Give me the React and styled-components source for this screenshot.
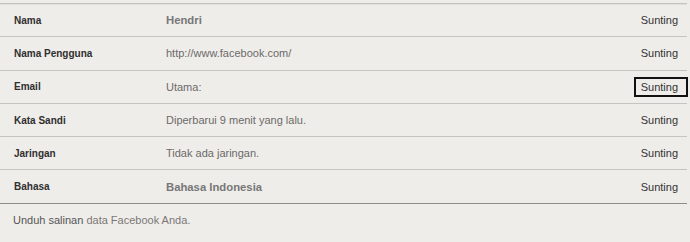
import React from "react";
import styled, { createGlobalStyle } from "styled-components";

const Global = createGlobalStyle`
  html, body { margin: 0; padding: 0; background: #efedea; }
  body { font-family: "Liberation Sans", Arial, sans-serif; font-size: 11px; }
`;

const Page = styled.div`
  width: 687px;
  padding-top: 3px;
`;

const Table = styled.div`
  border-top: 1px solid #c4c2bf;
  box-shadow: inset 0 1px 0 #e2e0dd;
  border-bottom: 1px solid #8e8c89;
`;

const Row = styled.div`
  display: grid;
  grid-template-columns: 152px 1fr auto;
  align-items: center;
  height: 32.3px;
  border-top: ${(p) => (p.$first ? "none" : "1px solid #c6c4c1")};
  padding: 0 2px 0 14px;
`;

const Label = styled.div`
  font-weight: bold;
  font-size: 10px;
  color: #2f2f2f;
`;

const Value = styled.div`
  font-weight: ${(p) => (p.$bold ? "bold" : "normal")};
  font-size: ${(p) => (p.$bold ? "11.3px" : "11px")};
  color: ${(p) => (p.$bold ? "#777" : "#6c6a68")};
`;

const Edit = styled.span`
  color: #333;
  line-height: 12px;
  padding: 2px ${(p) => (p.$focus ? "8px" : "5px")} 2px 5px;
  margin-right: ${(p) => (p.$focus ? "-3px" : "0")};
  border: 2px solid ${(p) => (p.$focus ? "#111" : "transparent")};
`;

const Footer = styled.div`
  padding: 10px 13px;
  color: #555;
`;

const Link = styled.span`
  color: #7a7876;
`;

const rows = [
  { label: "Nama", value: "Hendri", bold: true },
  { label: "Nama Pengguna", value: "http://www.facebook.com/" },
  { label: "Email", value: "Utama:", focus: true },
  { label: "Kata Sandi", value: "Diperbarui 9 menit yang lalu." },
  { label: "Jaringan", value: "Tidak ada jaringan." },
  { label: "Bahasa", value: "Bahasa Indonesia", bold: true },
];

export default function App() {
  return (
    <Page>
      <Global />
      <Table>
        {rows.map((r, i) => (
          <Row key={r.label} $first={i === 0}>
            <Label>{r.label}</Label>
            <Value $bold={r.bold}>{r.value}</Value>
            <Edit $focus={r.focus}>Sunting</Edit>
          </Row>
        ))}
      </Table>
      <Footer>
        Unduh salinan <Link>data Facebook Anda.</Link>
      </Footer>
    </Page>
  );
}
